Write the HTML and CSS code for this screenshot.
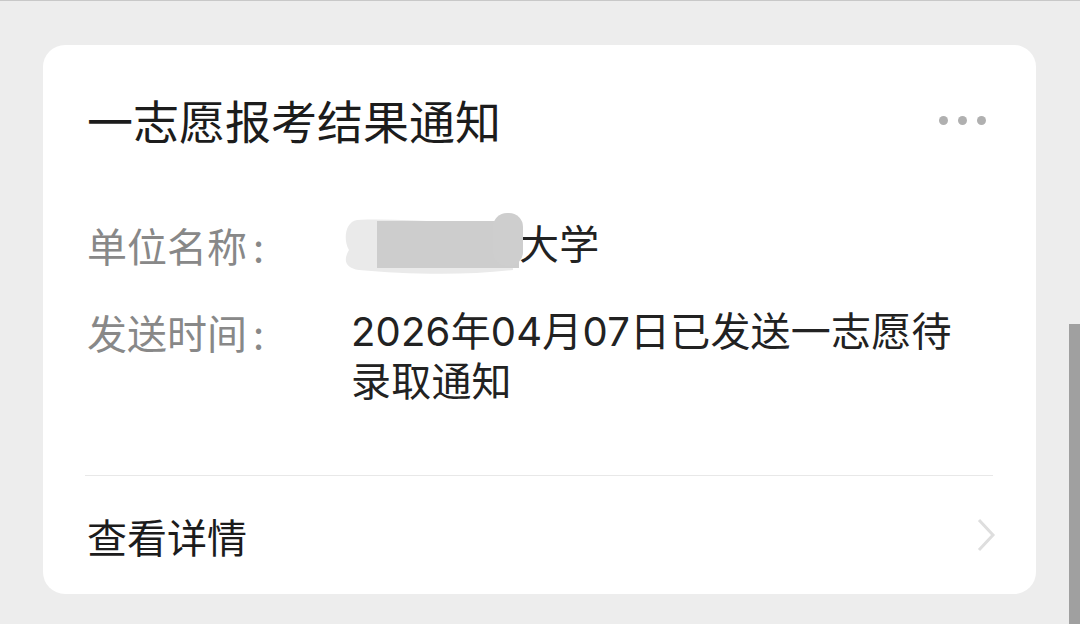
FILE: index.html
```
<!DOCTYPE html>
<html lang="zh-CN">
<head>
  <meta charset="UTF-8">
  <meta name="viewport" content="width=device-width, initial-scale=1.0">
  <title>一志愿报考结果通知</title>
  <link rel="stylesheet" href="styles.css">
</head>
<body>
  <div class="page">
    <!-- 通知卡片 -->
    <div class="card">
      <div class="card-head">
        <h1 class="card-title">一志愿报考结果通知</h1>
        <span class="more"><i></i><i></i><i></i></span>
      </div>
      <div class="card-body">
        <div class="row">
          <span class="label">单位名称<span class="colon">:</span></span>
          <span class="value"><span class="redact"><svg width="184" height="66" viewBox="0 0 184 66">
            <path d="M14 10 C60 8 120 14 168 16 L170 60 C120 66 60 64 16 60 C2 58 0 50 6 40 C0 30 2 12 14 10 Z" fill="#eaeaea"/>
            <rect x="34" y="11" width="142" height="47" fill="#cdcdcd"/>
            <rect x="150" y="3" width="30" height="53" rx="14" fill="#cecece"/>
          </svg></span>大学</span>
        </div>
        <div class="row">
          <span class="label">发送时间<span class="colon">:</span></span>
          <span class="value">2026年04月07日已发送一志愿待录取通知</span>
        </div>
      </div>
      <div class="card-foot">
        <span class="foot-text">查看详情</span>
        <svg class="chevron" width="20" height="36" viewBox="0 0 20 36"><path d="M3 3 L17 18 L3 33" fill="none" stroke="#dedede" stroke-width="3"/></svg>
      </div>
    </div>
  </div>
  <div class="scrollbar"></div>
</body>
</html>
```
FILE: styles.css
```
/* --- ページ全体 --- */
body {
  margin: 0;
  background: #ededed;
  font-family: "Noto Sans CJK SC", "Noto Sans", sans-serif;
  color: #1c1c1c;
  border-top: 1px solid #c8c8c8;
  height: 623px;
  overflow: hidden;
}
.page {
  padding: 44px 0 0 43px;
}
/* --- カード --- */
.card {
  width: 993px;
  height: 549px;
  box-sizing: border-box;
  background: #fff;
  border-radius: 22px;
  padding: 44px 43px 0 44px;
}
.card-head {
  display: flex;
  align-items: center;
  justify-content: space-between;
  height: 60px;
}
.card-title {
  margin: 0;
  font-size: 46px;
  font-weight: normal;
  line-height: 60px;
}
.more {
  display: flex;
  gap: 10px;
  margin: 2px 7px 0 0;
}
.more i {
  width: 9px;
  height: 9px;
  border-radius: 50%;
  background: #b0b0b0;
}
/* --- 本文 --- */
.card-body {
  padding-top: 71px;
  display: flex;
  flex-direction: column;
  gap: 37px;
}
.row {
  display: flex;
  font-size: 40px;
  line-height: 50px;
}
.label {
  width: 264px;
  flex: none;
  color: #888;
}
.colon {
  margin-left: 6px;
}
.value {
  width: 620px;
  color: #222;
  font-family: "Inter", "Noto Sans CJK SC", sans-serif;
  letter-spacing: 0.2px;
}
.redact {
  display: inline-block;
  position: relative;
  width: 168px;
  height: 39px;
  vertical-align: middle;
}
.redact svg {
  position: absolute;
  left: -8px;
  top: -19px;
}
/* --- フッター --- */
.card-foot {
  margin-top: 68px;
  border-top: 1px solid #e8e8e8;
  margin-left: -2px;
  padding-left: 2px;
  height: 118px;
  display: flex;
  align-items: center;
  justify-content: space-between;
}
.foot-text {
  font-size: 40px;
  line-height: 50px;
  margin-top: 1px;
}
.chevron {
  margin-right: -3px;
  margin-top: 0;
}
/* --- スクロールバー --- */
.scrollbar {
  position: absolute;
  right: 0;
  top: 324px;
  bottom: 0;
  width: 11px;
  background: #a0a0a0;
}
```
